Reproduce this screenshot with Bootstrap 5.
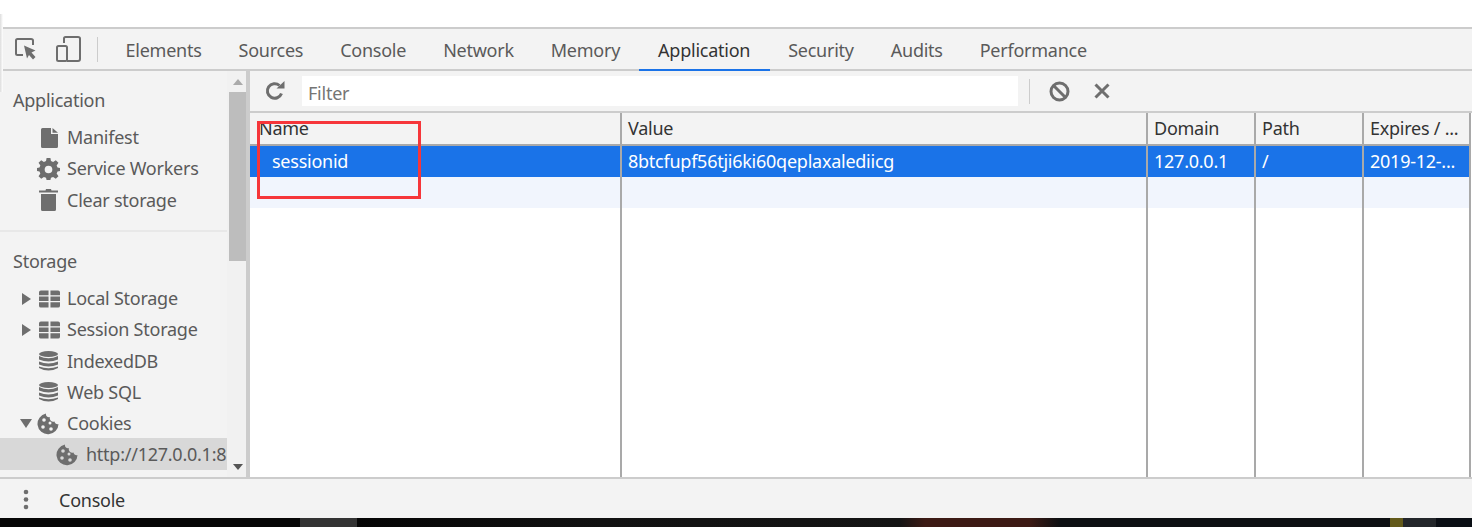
<!DOCTYPE html>
<html lang="en">
<head>
<meta charset="utf-8">
<title>DevTools</title>
<link href="https://cdn.jsdelivr.net/npm/bootstrap@5.3.0/dist/css/bootstrap.min.css" rel="stylesheet">
<style>
html,body{height:527px;overflow:hidden;background:#fff}
body{font-family:"Noto Sans","Open Sans",sans-serif;font-size:18px;letter-spacing:-.25px;color:#5a5a5a;position:relative}
.top-gap{height:27px;background:#fff}
.shade-edge{position:absolute;left:0;top:14px;width:3px;height:78px;background:linear-gradient(90deg,#ddd,#fff)}
.tab-bar{height:44px;background:#f3f3f3;border-top:2px solid #ccc;border-bottom:2px solid #ccc}
.tool-btn{color:#6e6e6e;flex:none}
.tool-sep{width:1px;height:25px;background:#ccc}
.tab-item{padding:0 18.500px;height:40px;line-height:43px;white-space:nowrap}
.tab-item.on{color:#333;border-bottom:2px solid #1a73e8;margin-bottom:-2px;height:42px;padding:0 19.500px}
.main-area{height:406px}
.side-pane{width:250px;flex:none;background:#f3f3f3;border-right:4px solid #ccc}
.side-list{width:227px;overflow:hidden}
.side-head{height:31px;line-height:31px;padding-left:13px;margin-top:14px;margin-bottom:6px}
.side-row{height:31.300px;line-height:31px;display:flex;align-items:center;white-space:nowrap;overflow:hidden}
.side-row svg{flex:none}
.side-row.sel{background:#d8d8d8;margin-top:-1px;padding-top:1px}
.side-rule{height:2px;background:#e8e8e8;margin:14px 0 14px}
.scroll-track{width:19px;background:#f1f1f1;padding-left:2px}
.scroll-arrow{height:21px;color:#888}
.scroll-thumb{height:169px;background:#bdbdbd}
.content-pane{min-width:0}
.filter-bar{height:42px;background:#f3f3f3;border-bottom:2px solid #ccc}
.filter-box{width:716px;height:30px;line-height:34px;background:#fff;padding-left:6px;color:#757575;margin:0 11px 0 17px}
.cookie-table{table-layout:fixed;border-collapse:collapse;width:1220px;height:364px;color:#333}
.cookie-table th,.cookie-table td{font-weight:400;padding:0 0 0 6px;border-right:2px solid #a9a9a9;white-space:nowrap;overflow:hidden;text-overflow:ellipsis;vertical-align:middle}
.cookie-table th{height:32px;background:#f3f3f3;border-bottom:2px solid #a9a9a9;line-height:28px;padding-bottom:1px}
.cookie-table td{line-height:29px}
.cookie-table td.name-cell{padding-left:22px}
.cookie-table th.name-cell{padding-left:9px}
.row-picked td{height:32px;background:#1a73e8;color:#fff}
.row-blank td{height:31px;background:#f1f5fd}
.red-mark{position:absolute;left:257px;top:121px;width:164px;height:78px;border:3px solid #f6363a}
.drawer-bar{height:41px;background:#f3f3f3;border-top:2px solid #ccc;color:#333}
.drawer-label{margin-top:3px}
.drawer-dots{margin-top:2px}
.bottom-strip{height:9px;background:linear-gradient(90deg,#060606 300px,#333 300px,#333 357px,#050505 357px,#111 600px,#141414 900px,#3c1a14 925px,#3c1a14 1030px,#0d0f12 1060px,#0d0f12 1390px,#62591a 1390px,#62591a 1403px,#23262a 1403px,#23262a 1436px,#0a0e14 1436px)}
</style>
</head>
<body>
<div class="top-gap"></div>
<div class="shade-edge"></div>

<div class="tab-bar d-flex align-items-center">
  <svg class="tool-btn" style="margin-left:15px" width="21" height="22" viewBox="0 0 21 22" fill="none"><path d="M8 17H2.500Q1 17 1 15.500V2.500Q1 1 2.500 1H16Q18 1 18 2.500V7" stroke="currentColor" stroke-width="2"/><path d="M9 7.500L20.500 12.500L16.500 14.500L20.500 19L18 21.500L14 17L12 20.500Z" fill="currentColor"/></svg>
  <svg class="tool-btn" style="margin-left:20px" width="25" height="26" viewBox="0 0 25 26" fill="none" stroke="currentColor" stroke-width="2"><path d="M8 7V2.500Q8 1 9.500 1H22Q24 1 24 2.500V23Q24 25 22 25H11"/><rect x="1" y="10" width="10" height="15" rx="1.500"/></svg>
  <span class="tool-sep" style="margin-left:16px;margin-right:9px"></span>
  <div class="tab-item">Elements</div>
  <div class="tab-item">Sources</div>
  <div class="tab-item">Console</div>
  <div class="tab-item">Network</div>
  <div class="tab-item">Memory</div>
  <div class="tab-item on">Application</div>
  <div class="tab-item">Security</div>
  <div class="tab-item">Audits</div>
  <div class="tab-item">Performance</div>
</div>

<div class="main-area d-flex">
  <aside class="side-pane d-flex">
    <div class="side-list flex-shrink-0">
      <div class="side-head">Application</div>
      <div class="side-row" style="padding-left:40px"><svg style="margin-right:7px" width="20" height="22" viewBox="0 0 20 22" fill="#6e6e6e"><path d="M2.500 1H11V7H18V19.500Q18 21 16.500 21H2.500Q1 21 1 19.500V2.500Q1 1 2.500 1ZM12.500 1L18 5.700H12.500Z"/></svg>Manifest</div>
      <div class="side-row" style="padding-left:37px"><svg style="margin-right:7px" width="23" height="23" viewBox="0 0 24 24" fill="#6e6e6e"><path fill-rule="evenodd" d="M10 1H14L14.600 4.300L16.800 5.200L19.600 3.300L22.400 6.100L20.500 8.900L21.400 11L24 11.500V14.500L21.400 15L20.500 17.200L22.400 20L19.600 22.800L16.800 20.900L14.600 21.700L14 24H10L9.400 21.700L7.200 20.900L4.400 22.800L1.600 20L3.500 17.200L2.600 15L0 14.500V11.500L2.600 11L3.500 8.900L1.600 6.100L4.400 3.300L7.200 5.200L9.400 4.300ZM12 9A4 4 0 1 0 12 17A4 4 0 1 0 12 9Z"/></svg>Service Workers</div>
      <div class="side-row" style="padding-left:39px"><svg class="me-2" width="20" height="24" viewBox="0 0 20 24" fill="#6e6e6e"><path d="M0 2.500H6.500L7 1H12L12.500 2.500H19V4.500H0ZM2 6H17V21.500Q17 23 15.500 23H3.500Q2 23 2 21.500Z"/></svg>Clear storage</div>
      <div class="side-rule"></div>
      <div class="side-head mt-0">Storage</div>
      <div class="side-row" style="padding-left:22px"><svg style="margin-right:1px" width="16" height="14" viewBox="0 0 16 14" fill="#6e6e6e"><path d="M0 1L9 7L0 13Z"/></svg><svg style="margin-right:7px" width="21" height="18" viewBox="0 0 22 18" fill="#6e6e6e"><path d="M2 0H10V5H0V2Q0 0 2 0ZM12 0H20Q22 0 22 2V5H12ZM0 6.500H10V11H0ZM12 6.500H22V11H12ZM0 12.500H10V18H2Q0 18 0 16ZM12 12.500H22V16Q22 18 20 18H12Z"/></svg>Local Storage</div>
      <div class="side-row" style="padding-left:22px"><svg style="margin-right:1px" width="16" height="14" viewBox="0 0 16 14" fill="#6e6e6e"><path d="M0 1L9 7L0 13Z"/></svg><svg style="margin-right:7px" width="21" height="18" viewBox="0 0 22 18" fill="#6e6e6e"><path d="M2 0H10V5H0V2Q0 0 2 0ZM12 0H20Q22 0 22 2V5H12ZM0 6.500H10V11H0ZM12 6.500H22V11H12ZM0 12.500H10V18H2Q0 18 0 16ZM12 12.500H22V16Q22 18 20 18H12Z"/></svg>Session Storage</div>
      <div class="side-row" style="padding-left:39px"><svg style="margin-right:9px" width="19" height="20" viewBox="0 0 19 20" fill="#6e6e6e"><ellipse cx="9.500" cy="3" rx="9.500" ry="3"/><path d="M0 5Q9.500 9.500 19 5V8.500Q9.500 12.500 0 8.500ZM0 10.500Q9.500 14.500 19 10.500V13.500Q9.500 17.500 0 13.500ZM0 15.500Q9.500 19 19 15.500V17Q9.500 22 0 17Z"/></svg>IndexedDB</div>
      <div class="side-row" style="padding-left:39px"><svg style="margin-right:9px" width="19" height="20" viewBox="0 0 19 20" fill="#6e6e6e"><ellipse cx="9.500" cy="3" rx="9.500" ry="3"/><path d="M0 5Q9.500 9.500 19 5V8.500Q9.500 12.500 0 8.500ZM0 10.500Q9.500 14.500 19 10.500V13.500Q9.500 17.500 0 13.500ZM0 15.500Q9.500 19 19 15.500V17Q9.500 22 0 17Z"/></svg>Web SQL</div>
      <div class="side-row" style="padding-left:20px"><svg style="margin-right:5px" width="12" height="9" viewBox="0 0 12 9" fill="#6e6e6e"><path d="M0 0H12L6 9Z"/></svg><svg style="margin-right:8px" width="22" height="22" viewBox="0 0 22 22"><path fill="#6e6e6e" d="M9 .5A3 3 0 0 0 13 4A3.500 3.500 0 0 0 17.500 8.500A3 3 0 0 0 21.500 11A10.500 10.500 0 1 1 9 .5Z"/><g fill="#f3f3f3"><circle cx="7" cy="7" r="1.800"/><circle cx="13" cy="10" r="1.500"/><circle cx="6" cy="14" r="1.800"/><circle cx="14" cy="16" r="1.800"/></g></svg>Cookies</div>
      <div class="side-row sel" style="padding-left:56px"><svg style="margin-right:8px" width="22" height="22" viewBox="0 0 22 22"><path fill="#6e6e6e" d="M9 .5A3 3 0 0 0 13 4A3.500 3.500 0 0 0 17.500 8.500A3 3 0 0 0 21.500 11A10.500 10.500 0 1 1 9 .5Z"/><g fill="#d8d8d8"><circle cx="7" cy="7" r="1.800"/><circle cx="13" cy="10" r="1.500"/><circle cx="6" cy="14" r="1.800"/><circle cx="14" cy="16" r="1.800"/></g></svg>http://127.0.0.1:8</div>
    </div>
    <div class="scroll-track d-flex flex-column flex-grow-1">
      <div class="scroll-arrow d-flex justify-content-center align-items-center"><svg width="10" height="6" viewBox="0 0 10 6" fill="#aaa"><path d="M5 0L10 6H0Z"/></svg></div>
      <div class="scroll-thumb"></div>
      <div class="flex-grow-1"></div>
      <div class="scroll-arrow d-flex justify-content-center align-items-center"><svg width="10" height="6" viewBox="0 0 10 6" fill="#555"><path d="M5 6L10 0H0Z"/></svg></div>
    </div>
  </aside>

  <section class="content-pane flex-grow-1">
    <div class="filter-bar d-flex align-items-center">
      <svg class="tool-btn" style="margin-left:15px" width="20" height="20" viewBox="0 0 20 20" fill="none"><path d="M16.500 12.500A7.300 7.300 0 1 1 14.500 4.500" stroke="currentColor" stroke-width="3"/><path d="M11.500 7.500H19.500V0Z" fill="currentColor"/></svg>
      <div class="filter-box">Filter</div>
      <span class="tool-sep"></span>
      <svg class="tool-btn" style="margin-left:19px" width="21" height="21" viewBox="0 0 21 21" fill="none" stroke="currentColor" stroke-width="3"><circle cx="10.500" cy="10.500" r="8.500"/><path d="M4.500 4.500L16.500 16.500"/></svg>
      <svg class="tool-btn" style="margin-left:24px" width="16" height="16" viewBox="0 0 16 16" fill="none" stroke="currentColor" stroke-width="3"><path d="M1.500 1.500L14.500 14.500M14.500 1.500L1.500 14.500"/></svg>
    </div>
    <table class="cookie-table">
      <colgroup><col style="width:371px"><col style="width:526px"><col style="width:108px"><col style="width:108px"><col style="width:107px"></colgroup>
      <thead><tr><th class="name-cell">Name</th><th>Value</th><th>Domain</th><th>Path</th><th>Expires / ...</th></tr></thead>
      <tbody>
        <tr class="row-picked"><td class="name-cell">sessionid</td><td>8btcfupf56tji6ki60qeplaxalediicg</td><td>127.0.0.1</td><td>/</td><td>2019-12-...</td></tr>
        <tr class="row-blank"><td></td><td></td><td></td><td></td><td></td></tr>
        <tr><td></td><td></td><td></td><td></td><td></td></tr>
      </tbody>
    </table>
  </section>
</div>

<div class="drawer-bar d-flex align-items-center">
  <svg class="tool-btn drawer-dots" style="margin-left:23px" width="6" height="21" viewBox="0 0 6 21" fill="#6e6e6e"><circle cx="3" cy="3" r="2.300"/><circle cx="3" cy="10.500" r="2.300"/><circle cx="3" cy="18" r="2.300"/></svg>
  <div class="drawer-label" style="margin-left:30px">Console</div>
</div>
<div class="bottom-strip"></div>
<div class="red-mark"></div>
<script src="https://cdn.jsdelivr.net/npm/bootstrap@5.3.0/dist/js/bootstrap.bundle.min.js"></script>
</body>
</html>
